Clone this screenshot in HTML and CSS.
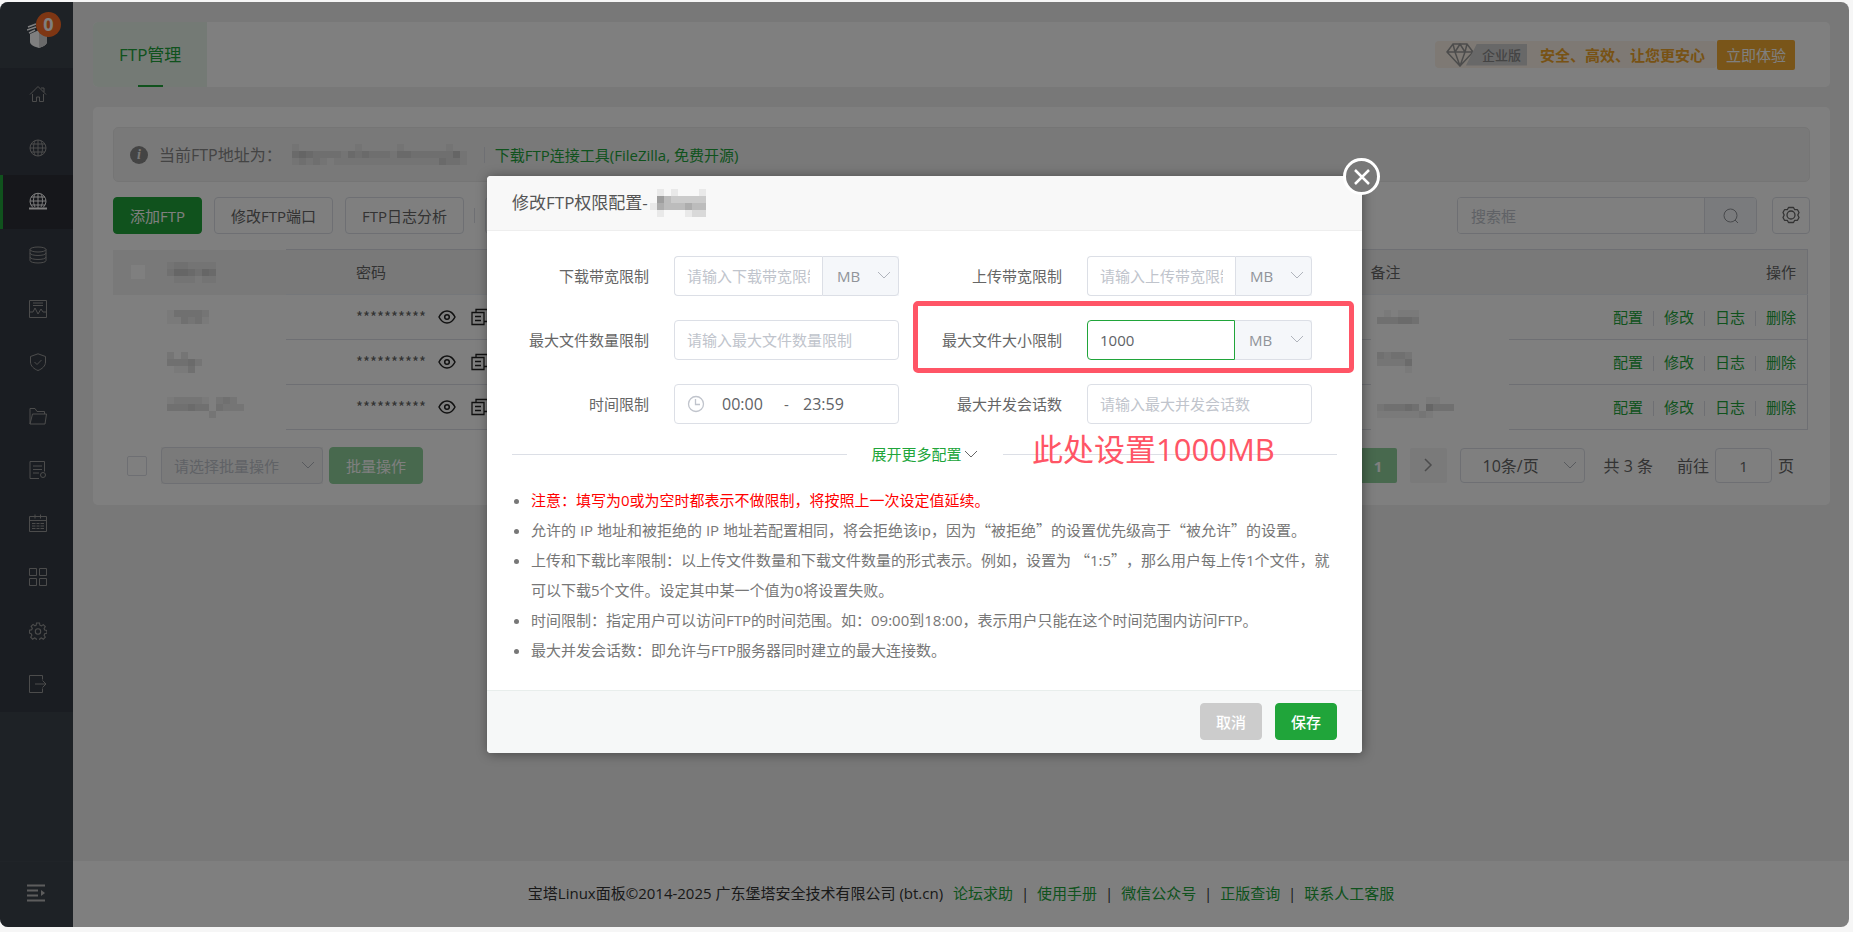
FILE: index.html
```html
<!DOCTYPE html>
<html lang="zh-CN">
<head>
    <meta charset="utf-8">
    <title>FTP管理</title>
    <meta name="viewport" content="width=device-width, initial-scale=1">
    <link rel="stylesheet" href="styles.css">
    <script src="main.js" defer></script>
</head>
<body>
<svg class="defs" aria-hidden="true">
    <symbol id="chevron" viewBox="0 0 14 14"><path d="M1 4l6 6 6-6" fill="none" stroke="currentColor"/></symbol>
    <symbol id="eye" viewBox="0 0 18 18"><path d="M1 9c2-4 5-6 8-6s6 2 8 6c-2 4-5 6-8 6s-6-2-8-6z" fill="none" stroke="currentColor" stroke-width="1.5"/><circle cx="9" cy="9" r="2.3" fill="none" stroke="currentColor" stroke-width="1.5"/></symbol>
    <symbol id="copy" viewBox="0 0 18 18"><path d="M1 4.500h12v12H1zM5 4V1.500h11.500v12H13M4 8.500h6M4 12.500h6" fill="none" stroke="currentColor" stroke-width="1.300"/></symbol>
    <symbol id="gear" viewBox="0 0 18 18"><path d="M7.500 1h3l.4 2.200 1.500.7 1.900-1.300 2 2-1.200 1.900.6 1.500 2.200.5v2.800l-2.200.5-.6 1.500 1.200 1.900-2 2-1.900-1.300-1.500.7-.4 2.200h-3l-.4-2.200-1.500-.7-1.900 1.300-2-2 1.200-1.900-.6-1.500L.5 11V8.300l2.200-.5.6-1.500-1.200-1.900 2-2L6 3.900l1.200-.7z" fill="none" stroke="currentColor" stroke-width="1.100"/><circle cx="9" cy="9.500" r="2.700" fill="none" stroke="currentColor" stroke-width="1.100"/></symbol>
    <symbol id="nut" viewBox="0 0 18 18"><path d="M6.500 1.500h5l1.200 2.200h2.800L17 6.500 15.800 9l1.200 2.500-1.500 2.800h-2.800l-1.200 2.200h-5l-1.200-2.200H2.500L1 11.500 2.200 9 1 6.500l1.500-2.800h2.800z" fill="none" stroke="currentColor" stroke-width="1.300" stroke-linejoin="round"/><circle cx="9" cy="9" r="4" fill="none" stroke="currentColor" stroke-width="1.300"/></symbol>
</svg>

<div class="window">
    <aside class="sidebar">
        <a class="logo" href="#" aria-label="宝塔面板">
            <svg width="22" height="26" viewBox="0 0 22 26"><path d="M3 12l9-4 8 4v8c0 3-5 5-8 6-4-1-9-3-9-6z" fill="#fff"/><path d="M12 8v18c3-1 8-3 8-6v-8z" fill="#d5d5d5"/><path d="M1 5l8-3M0 8l9-3M2 11l6-3" stroke="#fff" stroke-width="1.500"/></svg>
            <span class="badge">0</span>
        </a>
        <nav class="menu">
            <a href="#" aria-label="首页"><svg viewBox="0 0 18 18"><path d="M1 9.500L9 1.500l8 8M3.500 9v7.500h4V12h3v4.500h4V9M12 3h3v4"/></svg></a>
            <a href="#" aria-label="网站"><svg viewBox="0 0 18 18"><circle cx="9" cy="9" r="8"/><path d="M1 9h16M2 5h14M2 13h14M9 1v16M6 2c-2 4-2 10 0 14M12 2c2 4 2 10 0 14"/></svg></a>
            <a href="#" class="active" aria-label="FTP"><svg viewBox="0 0 18 18"><path d="M4 15.500a8 8 0 1 1 10 0M1 9h16M2 5h14M2 13h14M9 1v15M6 2c-2 4-2 9 0 13M12 2c2 4 2 9 0 13"/><path d="M0 16.500h18" stroke-width="2"/></svg></a>
            <a href="#" aria-label="数据库"><svg viewBox="0 0 18 18"><ellipse cx="9" cy="3.500" rx="8" ry="2.500"/><path d="M1 3.500v11c0 3.300 16 3.300 16 0v-11M1 7c0 3.300 16 3.300 16 0M1 11c0 3.300 16 3.300 16 0"/></svg></a>
            <a href="#" aria-label="监控"><svg viewBox="0 0 18 18"><path d="M.5.5h17v17H.5zM4 3h10M4 5.500h10M1 12h3l2-4 3 6 3-5 2 3h3"/></svg></a>
            <a href="#" aria-label="安全"><svg viewBox="0 0 18 18"><path d="M9 .8l7.500 2.700V9c0 4-3.500 7-7.500 8.500C5 16 1.500 13 1.500 9V3.500zM5.500 9l2.500 2.500 4.500-4.500"/></svg></a>
            <a href="#" aria-label="文件"><svg viewBox="0 0 18 18"><path d="M1 17V1.500h5l2 3h7.500V7M1 17L3.500 7h14L16 17z"/></svg></a>
            <a href="#" aria-label="日志"><svg viewBox="0 0 18 18"><path d="M10 17.500H1V.5h14.500v10M4 5h9M4 8.500h9M4 12h6"/><circle cx="14" cy="14" r="2.500"/></svg></a>
            <a href="#" aria-label="计划任务"><svg viewBox="0 0 18 18"><path d="M.5 2.500h17v15H.5zM.5 6.500h17M6 .5v4M11.500.5v4M3 9.500h12M3 12h12M3 14.500h12"/><path d="M7 8v8M11 8v8" stroke="#353b44"/></svg></a>
            <a href="#" aria-label="软件商店"><svg viewBox="0 0 18 18"><path d="M.5.5h7v7h-7zM10.500.5h7v7h-7zM.5 10.500h7v7h-7zM10.500 10.500h7v7h-7z"/></svg></a>
            <a href="#" aria-label="设置"><svg viewBox="0 0 18 18"><use href="#gear"/></svg></a>
            <a href="#" aria-label="退出"><svg viewBox="0 0 18 18"><path d="M13.500 4.500v-4H.5v17h13v-4M6 9h11M13.500 5.500L17 9l-3.500 3.500"/></svg></a>
        </nav>
        <button class="collapse" aria-label="展开菜单"><svg width="18" height="18" viewBox="0 0 18 18"><path d="M0 1.500h18M0 6.500h11M0 11.500h11M0 16.500h18" stroke="#bbb" stroke-width="2"/><path d="M14 6l4 3-4 3z" fill="#bbb"/></svg></button>
    </aside>

    <main class="main">
        <header class="card tabs">
            <a class="tab" href="#">FTP管理</a>
            <div class="upgrade">
                <div class="promo">
                    <svg class="diamond" width="28" height="24" viewBox="0 0 28 24"><path d="M7 1h14l6 8-13 14L1 9zM1 9h26M7 1l2 8 5 14 5-14 2-8M9 9l5-8 5 8" fill="none" stroke="#999" stroke-width="1.500"/></svg>
                    <span class="edition">企业版</span>
                    <strong>安全、高效、让您更安心</strong>
                </div>
                <button class="try">立即体验</button>
            </div>
        </header>

        <section class="card content">
            <div class="alert">
                <span class="info">i</span>
                <span>当前FTP地址为：</span>
                <span class="mosaic address" data-px="1000000001000001000000100|3432222132322213322222241|1212101111111111111113221"></span>
                <a href="#">下载FTP连接工具(FileZilla, 免费开源)</a>
            </div>

            <div class="toolbar">
                <button class="btn primary">添加FTP</button>
                <button class="btn">修改FTP端口</button>
                <button class="btn">FTP日志分析</button>
                <i class="sep"></i>
                <button class="btn" aria-label="更多"></button>
                <div class="search">
                    <input type="text" placeholder="搜索框" aria-label="搜索框">
                    <button aria-label="搜索"><svg width="16" height="16" viewBox="0 0 16 16"><circle cx="7.500" cy="7.500" r="6.500" fill="none" stroke="#909399"/><path d="M12 12l3 3" stroke="#909399"/></svg></button>
                </div>
                <button class="btn setting" aria-label="列设置"><svg width="18" height="18"><use href="#nut"/></svg></button>
            </div>

            <table>
                <thead>
                <tr>
                    <th class="name"><span class="mosaic" data-px="1221111|2443243|0111011"></span></th>
                    <th class="pwd">密码</th>
                    <th class="remark">备注</th>
                    <th class="ops">操作</th>
                </tr>
                </thead>
                <tbody>
                <tr>
                    <td class="name"><span class="mosaic" data-px="133332|113231"></span></td>
                    <td class="pwd"><div><span>**********</span><svg><use href="#eye"/></svg><svg><use href="#copy"/></svg></div></td>
                    <td class="remark"><span class="mosaic" data-px="010111|333443"></span></td>
                    <td class="ops"><a href="#">配置</a><a href="#">修改</a><a href="#">日志</a><a href="#">删除</a></td>
                </tr>
                <tr>
                    <td class="name"><span class="mosaic" data-px="20200|33342|01130"></span></td>
                    <td class="pwd"><div><span>**********</span><svg><use href="#eye"/></svg><svg><use href="#copy"/></svg></div></td>
                    <td class="remark"><span class="mosaic" data-px="32332|22224|00001"></span></td>
                    <td class="ops"><a href="#">配置</a><a href="#">修改</a><a href="#">日志</a><a href="#">删除</a></td>
                </tr>
                <tr>
                    <td class="name"><span class="mosaic" data-px="12222102320|33343303222|00000020000"></span></td>
                    <td class="pwd"><div><span>**********</span><svg><use href="#eye"/></svg><svg><use href="#copy"/></svg></div></td>
                    <td class="remark"><span class="mosaic" data-px="00000001100|23334305333|11111121000"></span></td>
                    <td class="ops"><a href="#">配置</a><a href="#">修改</a><a href="#">日志</a><a href="#">删除</a></td>
                </tr>
                </tbody>
            </table>

            <div class="bottom">
                <input type="checkbox" class="check" aria-label="全选">
                <div class="select batch">
                    <select aria-label="批量操作"><option>请选择批量操作</option></select>
                    <svg><use href="#chevron"/></svg>
                </div>
                <button class="btn primary disabled">批量操作</button>
                <div class="pager">
                    <button class="page current">1</button>
                    <button class="page" aria-label="下一页"><svg width="10" height="14" viewBox="0 0 10 14"><path d="M2 1l6 6-6 6" fill="none" stroke="#999" stroke-width="1.500"/></svg></button>
                    <div class="select size">
                        <select aria-label="每页条数"><option>10条/页</option></select>
                        <svg><use href="#chevron"/></svg>
                    </div>
                    <span class="total">共 3 条</span>
                    <label class="jump">前往<input type="text" value="1">页</label>
                </div>
            </div>
        </section>

        <footer class="footer">
            <span>宝塔Linux面板©2014-2025 广东堡塔安全技术有限公司 (bt.cn)</span>
            <a href="#">论坛求助</a><i>|</i><a href="#">使用手册</a><i>|</i><a href="#">微信公众号</a><i>|</i><a href="#">正版查询</a><i>|</i><a href="#">联系人工客服</a>
        </footer>
    </main>

    <div class="overlay">
        <div class="dialog" role="dialog" aria-labelledby="dialog-title">
            <button class="close" aria-label="关闭"><svg width="18" height="18" viewBox="0 0 18 18"><path d="M2 2l14 14M16 2L2 16" stroke="#fff" stroke-width="2.500"/></svg></button>
            <header>
                <h2 id="dialog-title">修改FTP权限配置-</h2>
                <span class="mosaic" data-px="01010001|06433333|15444544|01000122"></span>
            </header>
            <div class="body">
                <form class="form">
                    <div class="field">
                        <label for="down">下载带宽限制</label>
                        <div class="control">
                            <input id="down" type="text" placeholder="请输入下载带宽限制">
                            <div class="select unit"><select aria-label="单位"><option>MB</option></select><svg><use href="#chevron"/></svg></div>
                        </div>
                    </div>
                    <div class="field">
                        <label for="up">上传带宽限制</label>
                        <div class="control">
                            <input id="up" type="text" placeholder="请输入上传带宽限制">
                            <div class="select unit"><select aria-label="单位"><option>MB</option></select><svg><use href="#chevron"/></svg></div>
                        </div>
                    </div>
                    <div class="field">
                        <label for="files">最大文件数量限制</label>
                        <div class="control"><input id="files" type="text" placeholder="请输入最大文件数量限制"></div>
                    </div>
                    <div class="field">
                        <label for="size">最大文件大小限制</label>
                        <div class="control">
                            <input id="size" class="focused" type="text" value="1000">
                            <div class="select unit"><select aria-label="单位"><option>MB</option></select><svg><use href="#chevron"/></svg></div>
                        </div>
                    </div>
                    <div class="field">
                        <label for="from">时间限制</label>
                        <div class="control range">
                            <svg width="18" height="18" viewBox="0 0 18 18" fill="none" stroke="#c0c4cc" stroke-width="1.300"><circle cx="9" cy="9" r="7.500"/><path d="M8.500 4v5.500H13"/></svg>
                            <input id="from" type="text" value="00:00">
                            <span>-</span>
                            <input type="text" value="23:59" aria-label="结束时间">
                        </div>
                    </div>
                    <div class="field">
                        <label for="sessions">最大并发会话数</label>
                        <div class="control"><input id="sessions" type="text" placeholder="请输入最大并发会话数"></div>
                    </div>
                </form>
                <div class="more">
                    <button type="button">展开更多配置<svg width="14" height="14"><use href="#chevron"/></svg></button>
                </div>
                <ul class="tips">
                    <li class="warn">注意：填写为0或为空时都表示不做限制，将按照上一次设定值延续。</li>
                    <li>允许的 IP 地址和被拒绝的 IP 地址若配置相同，将会拒绝该ip，因为<q>被拒绝</q>的设置优先级高于<q>被允许</q>的设置。</li>
                    <li>上传和下载比率限制：以上传文件数量和下载文件数量的形式表示。例如，设置为 <q>1:5</q>，那么用户每上传1个文件，就可以下载5个文件。设定其中某一个值为0将设置失败。</li>
                    <li>时间限制：指定用户可以访问FTP的时间范围。如：09:00到18:00，表示用户只能在这个时间范围内访问FTP。</li>
                    <li>最大并发会话数：即允许与FTP服务器同时建立的最大连接数。</li>
                </ul>
            </div>
            <footer>
                <button class="btn cancel">取消</button>
                <button class="btn primary">保存</button>
            </footer>
            <div class="mark-box"></div>
            <div class="mark-text">此处设置1000MB</div>
        </div>
    </div>
</div>
</body>
</html>
```
FILE: styles.css
```css
* {
    box-sizing: border-box;
}
body {
    margin: 0;
    height: 100vh;
    padding: 2px 4px 5px 0;
    background: #f6f6f6;
    color: #666;
    text-spacing-trim: space-all;
}
body, input, select, button {
    font: 15px/20px "Open Sans", "Noto Sans CJK SC", sans-serif;
}
button {
    cursor: pointer;
}
a {
    color: #20a53a;
    text-decoration: none;
}
i {
    font-style: normal;
}
.defs {
    display: none;
}
.window {
    position: relative;
    display: flex;
    height: 100%;
    border-radius: 8px;
    overflow: hidden;
    background: #f1f1f1;
}

/* sidebar */
.sidebar {
    display: flex;
    flex-direction: column;
    width: 73px;
    background: #3c444d;
}
.logo {
    position: relative;
    height: 66px;
    padding: 20px 0 0 27px;
}
.badge {
    position: absolute;
    left: 36px;
    top: 10px;
    width: 25px;
    height: 25px;
    border-radius: 50%;
    background: #fc6d26;
    color: #fff;
    font-size: 18px;
    font-weight: bold;
    line-height: 25px;
    text-align: center;
}
.menu {
    display: flex;
    flex-direction: column;
    height: 644px;
    background: #353b44;
}
.menu a {
    flex: 1;
    display: flex;
    align-items: center;
    padding: 0 0 2px 29px;
    color: #999;
}
.menu a.active {
    padding-left: 26px;
    border-left: 3px solid #20a53a;
    background: #2c2f36;
    color: #fff;
}
.menu svg {
    width: 18px;
    height: 18px;
    fill: none;
    stroke: currentColor;
}
.collapse {
    margin-top: auto;
    height: 66px;
    padding: 0 0 0 27px;
    border: 0;
    border-top: 1px solid #414850;
    background: none;
    text-align: left;
}

/* page */
.main {
    flex: 1;
    display: flex;
    flex-direction: column;
    gap: 20px;
    padding-top: 20px;
}
.card {
    margin: 0 19px 0 20px;
    border-radius: 5px;
    background: #fff;
}
.tabs {
    display: flex;
    justify-content: space-between;
    align-items: center;
    padding-right: 35px;
    overflow: hidden;
}
.tab {
    position: relative;
    padding: 0 26px;
    background: #e8f4ea;
    font-size: 17px;
    line-height: 65px;
}
.tab::after {
    content: "";
    position: absolute;
    left: 45px;
    bottom: 0;
    width: 25px;
    height: 2px;
    background: #20a53a;
}
.upgrade, .promo {
    display: flex;
    align-items: center;
}
.promo {
    height: 27px;
    padding: 0 12px 0 11px;
    background: #fcf3e8;
    border-radius: 4px;
}
.promo strong {
    margin-left: 13px;
    color: #f0a52a;
}
.edition {
    margin-left: -8px;
    padding: 0 6px 0 16px;
    background: #d0d0d0;
    clip-path: polygon(11px 0, 100% 0, 100% 100%, 0 100%);
    color: #888;
    font-size: 13px;
    font-weight: 500;
    line-height: 22px;
}
.try {
    height: 30px;
    padding: 0 9px;
    border: 0;
    border-radius: 2px;
    background: #f3ab33;
    color: #fff;
}
.content {
    padding: 20px 20px 21px;
}
.alert {
    display: flex;
    align-items: center;
    height: 55px;
    padding-left: 16px;
    border: 1px solid #ebebeb;
    border-radius: 5px;
    background: #f2f2f2;
    color: #888;
    font-size: 16px;
}
.info {
    width: 18px;
    height: 18px;
    margin-right: 11px;
    border-radius: 50%;
    background: #888;
    color: #f2f2f2;
    font: italic bold 14px/18px "Liberation Serif", serif;
    text-align: center;
}
.alert a {
    margin-left: 17px;
    padding-left: 10px;
    border-left: 1px solid #dcdfe6;
    font-size: 15px;
    line-height: 16px;
}
.mosaic svg {
    display: block;
}
.address {
    margin-left: 10px;
}
.toolbar {
    display: flex;
    align-items: center;
    gap: 12px;
    margin: 15px 0;
}
.btn {
    height: 37px;
    padding: 0 16px;
    border: 1px solid #dcdfe6;
    border-radius: 4px;
    background: #fff;
    color: #666;
}
.btn.primary {
    border-color: #20a53a;
    background: #20a53a;
    color: #fff;
}
.btn.disabled {
    border-color: #90d29d;
    background: #90d29d;
}
.sep {
    width: 1px;
    height: 15px;
    margin: 0 -2px;
    background: #dcdfe6;
}
.search {
    display: flex;
    width: 300px;
    height: 37px;
    margin-left: auto;
    border: 1px solid #dcdfe6;
    border-radius: 4px;
    overflow: hidden;
}
.search input {
    flex: 1;
    min-width: 0;
    padding: 0 13px;
    border: 0;
}
.search button {
    width: 52px;
    padding: 4px 0 0;
    border: 0;
    border-left: 1px solid #dcdfe6;
    background: #f5f7fa;
}
::placeholder {
    color: #c0c4cc;
    opacity: 1;
}
.setting {
    width: 38px;
    margin-left: 3px;
    padding: 3px 0 0;
}
table {
    width: calc(100% - 2px);
    border-collapse: collapse;
    table-layout: fixed;
}
th, td {
    height: 45px;
    padding: 0;
    border-bottom: 1px solid #dcdfe6;
    font-weight: normal;
    text-align: left;
}
th {
    border-top: 1px solid #dcdfe6;
    border-bottom-color: #ebeef5;
    background: #f3f3f3;
}
.name {
    width: 173px;
    padding-left: 54px;
    border: 0;
}
th.name {
    background: linear-gradient(#fff, #fff) 18px 15px / 14px 14px no-repeat #f3f3f3;
}
.pwd {
    padding-left: 70px;
}
.pwd div {
    display: flex;
    align-items: center;
    gap: 15px;
    color: #222;
}
.pwd span {
    width: 67px;
    color: #666;
    font-family: "Noto Sans CJK SC", sans-serif;
}
.pwd svg {
    width: 18px;
    height: 18px;
}
.remark {
    width: 138px;
}
td.remark {
    padding-left: 6px;
    border: 0;
}
.ops {
    width: 299px;
    padding-right: 11px;
    border-right: 1px solid #dcdfe6;
    text-align: right;
}
.ops a + a {
    margin-left: 10px;
    padding-left: 11px;
    background: linear-gradient(#dcdfe6, #dcdfe6) 0 4px / 1px 15px no-repeat;
}
.bottom {
    display: flex;
    align-items: center;
    padding: 17px 16px 0 14px;
}
.check {
    appearance: none;
    width: 20px;
    height: 20px;
    margin: 0 14px 0 0;
    border: 1px solid #dcdfe6;
    border-radius: 2px;
}
.select {
    position: relative;
}
.select select {
    appearance: none;
    width: 100%;
    height: 100%;
    border: 1px solid #dcdfe6;
    border-radius: 4px;
    background: none;
    color: inherit;
}
.select svg {
    position: absolute;
    right: 8px;
    top: 50%;
    width: 14px;
    height: 14px;
    margin-top: -8px;
    color: #b0b4bc;
    pointer-events: none;
}
.batch {
    width: 162px;
    height: 37px;
    margin-right: 6px;
    background: #f5f5f5;
    color: #c0c4cc;
}
.batch select {
    padding: 0 12px;
}
.pager {
    display: flex;
    align-items: center;
    gap: 13px;
    margin-left: auto;
    font-size: 16px;
}
.page {
    width: 37px;
    height: 35px;
    padding: 0;
    border: 0;
    border-radius: 2px;
    background: #f4f4f5;
}
.page.current {
    background: #90d29d;
    color: #fff;
    font-weight: bold;
}
.size {
    width: 125px;
    height: 35px;
}
.size select {
    padding: 0 22px;
    font-size: 16px;
}
.total {
    margin: 0 11px 0 6px;
}
.jump {
    display: flex;
    align-items: center;
    gap: 6px;
}
.jump input {
    width: 57px;
    height: 35px;
    border: 1px solid #dcdfe6;
    border-radius: 4px;
    color: #666;
    text-align: center;
}
.footer {
    display: flex;
    justify-content: center;
    align-items: center;
    height: 66px;
    margin-top: auto;
    padding-bottom: 3px;
    background: #fff;
    color: #333;
}
.footer span {
    margin-right: 10px;
}
.footer i {
    width: 24px;
    text-align: center;
}

/* dialog */
.overlay {
    position: absolute;
    inset: 0;
    display: flex;
    align-items: center;
    justify-content: center;
    background: rgba(0, 0, 0, .5);
}
.dialog {
    position: relative;
    width: 875px;
    border-radius: 4px;
    background: #fff;
    box-shadow: 1px 1px 12px rgba(0, 0, 0, .4);
}
.dialog header {
    display: flex;
    align-items: center;
    height: 55px;
    padding: 0 25px;
    border-bottom: 1px solid #eee;
    border-radius: 4px 4px 0 0;
    background: #f8f8f8;
}
.dialog h2 {
    margin: 0 2px 0 0;
    color: #555;
    font-size: 17px;
    font-weight: normal;
}
.close {
    position: absolute;
    right: -18px;
    top: -18px;
    display: flex;
    align-items: center;
    justify-content: center;
    width: 37px;
    height: 37px;
    padding: 0;
    border: 3px solid #fff;
    border-radius: 50%;
    background: #787878;
}
.body {
    padding: 25px 25px 24px;
}
.form {
    display: grid;
    grid-template-columns: 1fr 1fr;
    gap: 24px 26px;
    padding-right: 25px;
}
.field {
    display: flex;
    align-items: center;
    justify-content: flex-end;
    gap: 25px;
}
.control {
    display: flex;
    width: 225px;
    height: 40px;
}
.control input {
    flex: 1;
    min-width: 0;
    padding: 0 12px;
    border: 1px solid #dcdfe6;
    border-radius: 4px;
    color: #606266;
}
.control input:not(:last-child) {
    border-right: 0;
    border-radius: 4px 0 0 4px;
}
.control input.focused {
    border: 1px solid #20a53a;
}
.unit {
    width: 77px;
    background: #f5f7fa;
    color: #909399;
}
.unit select {
    padding: 0 14px;
    border-radius: 0 4px 4px 0;
}
.focused + .unit select {
    border-left: 0;
}
.range {
    align-items: center;
    padding: 0 12px;
    border: 1px solid #dcdfe6;
    border-radius: 4px;
}
.control.range input {
    flex: none;
    width: 62px;
    padding: 0;
    border: 0;
    font-size: 16px;
}
.range svg {
    margin-right: 17px;
}
.range span {
    width: 19px;
}
.more {
    display: flex;
    align-items: center;
    gap: 25px;
    height: 30px;
    margin: 15px 0 16px;
}
.more::before, .more::after {
    content: "";
    flex: 1;
    height: 1px;
    background: #dcdfe6;
}
.more button {
    display: flex;
    align-items: center;
    gap: 2px;
    padding: 0;
    border: 0;
    background: none;
    color: #20a53a;
}
.more svg {
    color: #666;
}
.tips {
    margin: 0;
    padding: 0 0 1px 19px;
    color: #777;
    line-height: 30px;
}
.tips .warn {
    color: red;
}
.tips .warn::marker {
    color: #777;
}
q::before, q::after {
    font-family: "Noto Sans CJK SC", sans-serif;
}
q::before {
    content: "“";
}
q::after {
    content: "”";
}
.dialog footer {
    display: flex;
    justify-content: flex-end;
    gap: 13px;
    padding: 12px 25px 13px;
    border-top: 1px solid #e8eeec;
    border-radius: 0 0 4px 4px;
    background: #f6f8f8;
}
.dialog .btn {
    padding: 0 15px;
    font-weight: 500;
}
.btn.cancel {
    border-color: #ccc;
    background: #ccc;
    color: #fff;
}
.mark-box {
    position: absolute;
    left: 426px;
    top: 125px;
    width: 441px;
    height: 72px;
    border: 5px solid #ff5566;
    border-radius: 5px;
    pointer-events: none;
}
.mark-text {
    position: absolute;
    left: 545px;
    top: 253px;
    color: #ff5566;
    font-size: 31px;
    line-height: 40px;
}
```
FILE: main.js
```js
// masked names are drawn as 7px blocks, one digit per block
const SIZE = 7;

document.querySelectorAll('.mosaic').forEach(el => {
    const rows = el.dataset.px.split('|');
    const shade = el.closest('.dialog') ? 0.06 : 0.04;
    let rects = '';
    rows.forEach((row, y) => {
        [...row].forEach((level, x) => {
            rects += `<rect x="${x * SIZE}" y="${y * SIZE}" width="${SIZE}" height="${SIZE}" fill-opacity="${level * shade}"/>`;
        });
    });
    el.innerHTML = `<svg width="${rows[0].length * SIZE}" height="${rows.length * SIZE}">${rects}</svg>`;
});
```
